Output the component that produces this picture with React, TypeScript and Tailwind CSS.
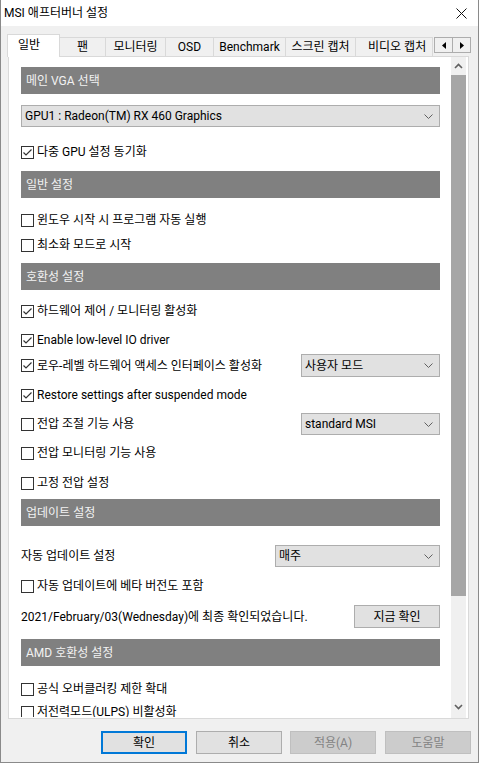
import React from 'react';

const FONT = "font-['Roboto','Noto_Sans_CJK_KR',sans-serif]";

function CheckBox({ checked }: { checked?: boolean }) {
    return (
        <span className="w-[13px] h-[13px] shrink-0 border border-[#333333] bg-white flex items-center justify-center">
            {checked && (
                <svg width="11" height="11" viewBox="0 0 11 11">
                    <polyline points="1.5,5.5 4,8 9.5,2.5" fill="none" stroke="#333333" strokeWidth="1.2" />
                </svg>
            )}
        </span>
    );
}

function CheckRow({ label, checked, className = '' }: { label: string; checked?: boolean; className?: string }) {
    return (
        <div className={`flex items-center shrink-0 h-[20px] gap-[3px] ${className}`}>
            <CheckBox checked={checked} />
            <span className="whitespace-nowrap">{label}</span>
        </div>
    );
}

function Chevron() {
    return (
        <svg width="9" height="5" viewBox="0 0 9 5" className="shrink-0">
            <polyline points="0.5,0.5 4.5,4.5 8.5,0.5" fill="none" stroke="#606060" strokeWidth="1" />
        </svg>
    );
}

function Select({ value, className = '' }: { value: string; className?: string }) {
    return (
        <div className={`flex items-center justify-between shrink-0 bg-[#e1e1e1] border border-[#adadad] pl-[3px] pr-[6px] ${className}`}>
            <span className="whitespace-nowrap">{value}</span>
            <Chevron />
        </div>
    );
}

function Header({ title, className = '' }: { title: string; className?: string }) {
    return (
        <div className={`w-[419px] h-[27px] shrink-0 bg-[#808080] text-[#f2f2f2] flex items-center pl-[5px] ${className}`}>
            {title}
        </div>
    );
}

const tabs = [
    { label: '팬', w: 'w-[46px]' },
    { label: '모니터링', w: 'w-[60px]' },
    { label: 'OSD', w: 'w-[48px]' },
    { label: 'Benchmark', w: 'w-[72px]' },
    { label: '스크린 캡처', w: 'w-[70px]' },
    { label: '비디오 캡처', w: 'w-[77px]' },
];

export default function App() {
    return (
        <div className={`w-[479px] h-[763px] bg-[#f0f0f0] border-x border-b border-[#8a8a8a] flex flex-col text-[12px] text-black ${FONT}`}>
            {/* Title bar */}
            <div className="h-[26px] shrink-0 bg-white flex items-center justify-between pl-[3px] pr-[11px]">
                <span className="text-[12px]">MSI 애프터버너 설정</span>
                <svg width="11" height="11" viewBox="0 0 11 11">
                    <path d="M0.5 0.5 L10.5 10.5 M10.5 0.5 L0.5 10.5" stroke="#111" strokeWidth="1" />
                </svg>
            </div>

            {/* Tabs */}
            <div className="flex items-end shrink-0 h-[22px] mt-[8px] ml-[6px] relative z-10">
                <div className="w-[53px] h-[23px] shrink-0 bg-white border border-[#d9d9d9] border-b-0 flex items-center pb-[2px] pl-[10px] mb-[-1px]">
                    일반
                </div>
                {tabs.map((t, i) => (
                    <div
                        key={t.label}
                        className={`${t.w} h-[19px] shrink-0 border-t border-r border-[#d9d9d9] bg-[#f0f0f0] flex items-center overflow-hidden whitespace-nowrap ${i === tabs.length - 1 ? 'justify-start pl-[12px]' : 'justify-center'}`}
                    >
                        {t.label}
                    </div>
                ))}
                <div className="flex self-start mt-[3px] ml-[1px]">
                    <div className="w-[19px] h-[16px] border border-[#adadad] bg-[#f0f0f0] flex items-center justify-center">
                        <svg width="4" height="7" viewBox="0 0 4 7"><polygon points="4,0 0,3.5 4,7" fill="#000" /></svg>
                    </div>
                    <div className="w-[18px] h-[16px] border border-l-0 border-[#adadad] bg-[#f0f0f0] flex items-center justify-center">
                        <svg width="4" height="7" viewBox="0 0 4 7"><polygon points="0,0 4,3.5 0,7" fill="#000" /></svg>
                    </div>
                </div>
            </div>

            {/* Panel */}
            <div className="ml-[7px] w-[461px] h-[663px] shrink-0 border border-[#d9d9d9] bg-white flex">
                <div className="w-[442px] h-[660px] overflow-hidden pl-[12px] flex flex-col">
                    <Header title="메인 VGA 선택" className="mt-[10px]" />
                    <Select value="GPU1 : Radeon(TM) RX 460 Graphics" className="w-[419px] h-[22px] mt-[11px]" />
                    <CheckRow label="다중 GPU 설정 동기화" checked className="mt-[15px]" />
                    <Header title="일반 설정" className="mt-[9px]" />
                    <CheckRow label="윈도우 시작 시 프로그램 자동 실행" className="mt-[12px]" />
                    <CheckRow label="최소화 모드로 시작" className="mt-[5px]" />
                    <Header title="호환성 설정" className="mt-[8px]" />
                    <CheckRow label="하드웨어 제어 / 모니터링 활성화" checked className="mt-[11px]" />
                    <CheckRow label="Enable low-level IO driver" checked className="mt-[9px]" />
                    <div className="flex items-center justify-between shrink-0 w-[419px] h-[23px] mt-[4px]">
                        <CheckRow label="로우-레벨 하드웨어 액세스 인터페이스 활성화" checked />
                        <Select value="사용자 모드" className="w-[139px] h-[23px]" />
                    </div>
                    <CheckRow label="Restore settings after suspended mode" checked className="mt-[8px]" />
                    <div className="flex items-center justify-between shrink-0 w-[419px] h-[22px] mt-[8px]">
                        <CheckRow label="전압 조절 기능 사용" />
                        <Select value="standard MSI" className="w-[139px] h-[22px]" />
                    </div>
                    <CheckRow label="전압 모니터링 기능 사용" className="mt-[8px]" />
                    <CheckRow label="고정 전압 설정" className="mt-[10px]" />
                    <Header title="업데이트 설정" className="mt-[6px]" />
                    <div className="flex items-center justify-between shrink-0 w-[419px] h-[22px] mt-[19px]">
                        <span>자동 업데이트 설정</span>
                        <Select value="매주" className="w-[165px] h-[22px]" />
                    </div>
                    <CheckRow label="자동 업데이트에 베타 버전도 포함" className="mt-[9px]" />
                    <div className="flex items-center justify-between shrink-0 w-[419px] h-[23px] mt-[9px]">
                        <span className="whitespace-nowrap">2021/February/03(Wednesday)에 최종 확인되었습니다.</span>
                        <div className="w-[86px] h-[23px] bg-[#e1e1e1] border border-[#adadad] flex items-center justify-center">
                            지금 확인
                        </div>
                    </div>
                    <Header title="AMD 호환성 설정" className="mt-[11px]" />
                    <CheckRow label="공식 오버클러킹 제한 확대" className="mt-[13px]" />
                    <CheckRow label="저전력모드(ULPS) 비활성화" className="mt-[3px]" />
                </div>
                {/* Scrollbar */}
                <div className="w-[15px] h-[661px] bg-[#f0f0f0] flex flex-col items-center">
                    <div className="h-[18px] w-full shrink-0 flex items-center justify-center">
                        <svg width="9" height="6" viewBox="0 0 9 6">
                            <polyline points="1,5 4.5,1.5 8,5" fill="none" stroke="#606060" strokeWidth="1.6" />
                        </svg>
                    </div>
                    <div className="w-full h-[521px] shrink-0 bg-[#a6a6a6]" />
                    <div className="flex-1" />
                    <div className="h-[18px] w-full shrink-0 flex items-center justify-center mb-[2px]">
                        <svg width="9" height="6" viewBox="0 0 9 6">
                            <polyline points="1,1 4.5,4.5 8,1" fill="none" stroke="#606060" strokeWidth="1.6" />
                        </svg>
                    </div>
                </div>
            </div>

            {/* Bottom buttons */}
            <div className="flex mt-[12px] pl-[100px]">
                <div className="w-[86px] h-[23px] bg-[#e1e1e1] border-2 border-[#0078d7] flex items-center justify-center">확인</div>
                <div className="w-[86px] h-[23px] ml-[9px] bg-[#e1e1e1] border border-[#adadad] flex items-center justify-center">취소</div>
                <div className="w-[86px] h-[23px] ml-[8px] bg-[#cccccc] border border-[#bfbfbf] text-[#838383] flex items-center justify-center">적용(A)</div>
                <div className="w-[86px] h-[23px] ml-[9px] bg-[#cccccc] border border-[#bfbfbf] text-[#838383] flex items-center justify-center">도움말</div>
            </div>
        </div>
    );
}
